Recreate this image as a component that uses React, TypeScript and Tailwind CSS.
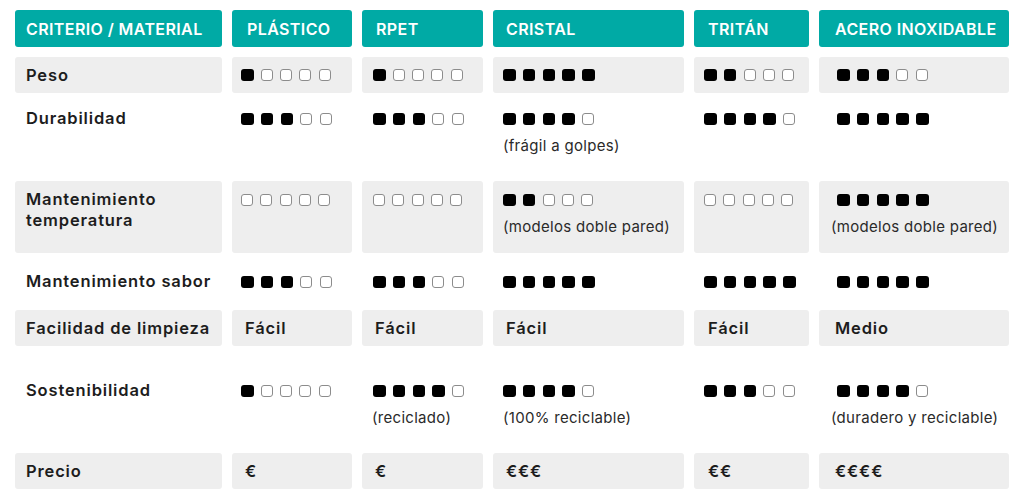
import React from "react";

type Cell = { dots?: number; text?: string; note?: string };
type Row = { label: string[]; gray: boolean; pt?: string; cells: Cell[] };

const heads = ["PLÁSTICO", "RPET", "CRISTAL", "TRITÁN", "ACERO INOXIDABLE"];
// per-column left offsets (the reference isn't perfectly consistent)
const headPad = ["pl-[15px]", "pl-[14px]", "pl-[13px]", "pl-[14px]", "pl-[16px]"];
const textPad = ["pl-[13px]", "pl-[13px]", "pl-[13px]", "pl-[14px]", "pl-[16px]"];
const dotPad = ["pl-[9px]", "pl-[11px]", "pl-[10px]", "pl-[10px]", "pl-[18px]"];
const notePad = ["pl-[10px]", "pl-[10px]", "pl-[10px]", "pl-[10px]", "pl-[12px]"];

const rows: Row[] = [
  { label: ["Peso"], gray: true, cells: [{ dots: 1 }, { dots: 1 }, { dots: 5 }, { dots: 2 }, { dots: 3 }] },
  {
    label: ["Durabilidad"], gray: false, pt: "pt-[5px]",
    cells: [{ dots: 3 }, { dots: 3 }, { dots: 4, note: "(frágil a golpes)" }, { dots: 4 }, { dots: 5 }],
  },
  {
    label: ["Mantenimiento", "temperatura"], gray: true, pt: "pt-[8px]",
    cells: [{ dots: 0 }, { dots: 0 }, { dots: 2, note: "(modelos doble pared)" }, { dots: 0 }, { dots: 5, note: "(modelos doble pared)" }],
  },
  { label: ["Mantenimiento sabor"], gray: false, cells: [{ dots: 3 }, { dots: 3 }, { dots: 5 }, { dots: 5 }, { dots: 5 }] },
  { label: ["Facilidad de limpieza"], gray: true, cells: [{ text: "Fácil" }, { text: "Fácil" }, { text: "Fácil" }, { text: "Fácil" }, { text: "Medio" }] },
  {
    label: ["Sostenibilidad"], gray: false, pt: "pt-[24px]",
    cells: [{ dots: 1 }, { dots: 4, note: "(reciclado)" }, { dots: 4, note: "(100% reciclable)" }, { dots: 3 }, { dots: 4, note: "(duradero y reciclable)" }],
  },
  { label: ["Precio"], gray: true, cells: [{ text: "€" }, { text: "€" }, { text: "€€€" }, { text: "€€" }, { text: "€€€€" }] },
];

function Dots({ n }: { n: number }) {
  return (
    <div className="flex items-center gap-[7.3px] h-[21px]">
      {[0, 1, 2, 3, 4].map((i) =>
        i < n ? (
          <span key={i} className="w-[12.5px] h-[12px] rounded-[3px] bg-black" />
        ) : (
          <span key={i} className="w-[12px] h-[12px] rounded-[3px] border border-[#8c8c8c] bg-white" />
        )
      )}
    </div>
  );
}

export default function App() {
  return (
    <div className="w-[1024px] h-[503px] bg-white pt-[10px] pl-[15px] text-[#1d1d1d]" style={{ fontFamily: "Inter, 'Noto Sans', sans-serif" }}>
      <div className="grid grid-cols-[207px_120px_121px_191px_115px_190px] grid-rows-[37px_36px_68px_72px_37px_36px_87px_36px] gap-x-[10px] gap-y-[10px]">
        <div className="bg-[#00aaa5] rounded-[3px] flex items-center pl-[11px] text-white font-semibold text-[16px] tracking-[0.4px]">CRITERIO / MATERIAL</div>
        {heads.map((h, i) => (
          <div key={h} className={`bg-[#00aaa5] rounded-[3px] flex items-center ${headPad[i]} text-white font-semibold text-[16px] tracking-[0.4px]`}>{h}</div>
        ))}

        {rows.map((r) => (
          <React.Fragment key={r.label.join(" ")}>
            <div className={`${r.gray ? "bg-[#eeeeee]" : ""} rounded-[3px] pl-[11px] font-semibold text-[16.5px] leading-[21px] tracking-[0.85px] ${r.pt ? r.pt : "flex flex-col justify-center"}`}>
              {r.label.map((l) => <div key={l}>{l}</div>)}
            </div>
            {r.cells.map((c, i) => (
              <div key={i} className={`${r.gray ? "bg-[#eeeeee]" : ""} rounded-[3px] ${r.pt ? r.pt : "flex flex-col justify-center"}`}>
                {c.dots !== undefined && <div className={dotPad[i]}><Dots n={c.dots} /></div>}
                {c.text && <div className={`${textPad[i]} font-semibold text-[16.5px] leading-[21px] tracking-[0.85px]`}>{c.text}</div>}
                {c.note && <div className={`${notePad[i]} mt-[6px] text-[15px] leading-[21px] text-[#2a2a2a] tracking-[0.3px] whitespace-nowrap`}>{c.note}</div>}
              </div>
            ))}
          </React.Fragment>
        ))}
      </div>
    </div>
  );
}
